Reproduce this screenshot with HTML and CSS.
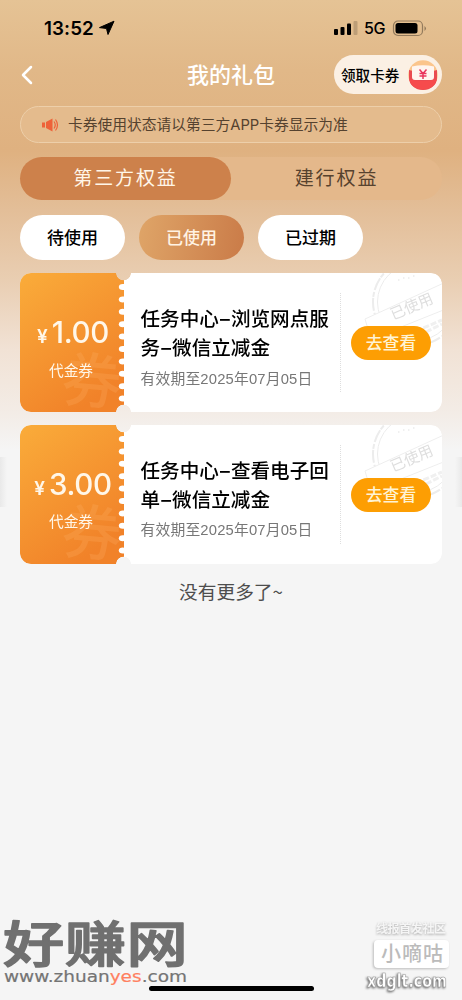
FILE: index.html
```html
<!DOCTYPE html>
<html lang="zh-CN">
<head>
<meta charset="utf-8">
<title>我的礼包</title>
<link rel="stylesheet" href="styles.css">
</head>
<body>
<svg class="defs" width="0" height="0" aria-hidden="true">
  <defs>
    <linearGradient id="orange" x1="0" y1="0" x2=".55" y2="1"><stop stop-color="#faac3a"/><stop offset="1" stop-color="#f18229"/></linearGradient>
    <symbol id="teeth" viewBox="0 0 10 140">
      <g fill="#fff"><ellipse cx="4.800" cy="14" rx="4" ry="3"/><ellipse cx="4.800" cy="26.4" rx="4" ry="3"/><ellipse cx="4.800" cy="38.8" rx="4" ry="3"/><ellipse cx="4.800" cy="51.2" rx="4" ry="3"/><ellipse cx="4.800" cy="63.6" rx="4" ry="3"/><ellipse cx="4.800" cy="76" rx="4" ry="3"/><ellipse cx="4.800" cy="88.4" rx="4" ry="3"/><ellipse cx="4.800" cy="100.8" rx="4" ry="3"/><ellipse cx="4.800" cy="113.2" rx="4" ry="3"/><ellipse cx="4.800" cy="125.6" rx="4" ry="3"/></g>
    </symbol>
    <symbol id="stamp" viewBox="0 0 80 70">
      <g fill="none" stroke="#ececec">
        <circle cx="54" cy="29" r="43" stroke-width="2" stroke-dasharray="13 1 5 2"/>
        <circle cx="54" cy="29" r="38.5" stroke-width="1"/>
        <path d="M36 7h1.500M41 5h1.500M46 5h1.500M51 3h1.500" stroke-width="1.500"/>
        <path d="M54 58l26-11M64 59l16-8" stroke-width="3" stroke-dasharray="6 2" stroke="#f0f0f0"/>
      </g>
      <path d="M3 46L84 9V36L9 66Z" fill="#fff" stroke="#eee"/>
      <text class="stamp-text" x="31" y="47" transform="rotate(-23 31 47)">已使用</text>
    </symbol>
  </defs>
</svg>
<main class="screen">
  <header class="status">
    <span class="time">13:52</span>
    <svg class="arrow" width="18" height="16" viewBox="0 0 18 16"><path d="M17 1.200L11 14.500 9.500 8.500 2.500 7.600Z" stroke="#000" stroke-linejoin="round"/></svg>
    <span class="grow"></span>
    <svg width="25" height="16" viewBox="0 0 25 16"><rect x="0" y="9" width="4" height="6" rx="1"/><rect x="6.500" y="7" width="4" height="8" rx="1"/><rect x="13" y="3.500" width="4" height="11.500" rx="1"/><rect x="19.500" y="1" width="4" height="14" rx="1" fill="#bd9e77"/></svg>
    <span class="network">5G</span>
    <svg width="35" height="17" viewBox="0 0 35 17"><rect x="1.500" y="1" width="29" height="14.5" rx="4.5" fill="none" stroke="#937a5c" stroke-width="1.2"/><rect x="3.500" y="3" width="22" height="10.5" rx="2.5"/><path d="M32.500 6q3 2.500 0 5z" fill="#937a5c"/></svg>
  </header>
  <nav class="navbar">
    <svg class="back" width="14" height="22" viewBox="0 0 14 22"><path d="M11 3L3 11L11 19" fill="none" stroke="#fff" stroke-width="2.5" stroke-linecap="round" stroke-linejoin="round"/></svg>
    <h1>我的礼包</h1>
    <a class="claim"><span>领取卡券</span>
      <svg width="32" height="32" viewBox="0 0 32 32"><circle cx="16" cy="16" r="14.700" fill="#fbc58c"/><path d="M2 11L6 12V9H26V12L30 11V19A14 12 0 0 1 2 19Z" fill="#e94b51"/><path d="M2 20Q16 24 30 20Q27 30.500 16 30.500T2 20" fill="#f64b4c"/><path d="M5 7.500Q16 5 27 7.500V18Q27 21 24 21H8Q5 21 5 18Z" fill="#fff5ef"/><path d="M12.500 10.500l3.500 4 3.500-4M16 14.500v5.500M12.500 14.500h7M12.500 17h7" fill="none" stroke="#e9345c" stroke-width="1.500"/></svg>
    </a>
  </nav>
  <div class="notice">
    <svg width="18" height="16" viewBox="0 0 18 16"><path d="M0 5.500H3V10.500H0ZM4 5L10.500 1.500V14.500L4 11Z" fill="#ee6239"/><path d="M12 4.500q2.500 3.500 0 7M13.500 2.500q4 5.500 0 11" fill="none" stroke="#ee6239" stroke-width="1.200"/></svg>
    <span>卡券使用状态请以第三方APP卡券显示为准</span>
  </div>
  <div class="tabs"><span class="tab active">第三方权益</span><span class="tab">建行权益</span></div>
  <div class="chips"><span class="chip">待使用</span><span class="chip selected">已使用</span><span class="chip">已过期</span></div>
  <section class="cards">
    <article class="card">
      <div class="value">
        <svg class="paint" width="104" height="139" viewBox="0 0 104 139"><rect width="104" height="139" fill="url(#orange)"/><text class="ghost" x="42" y="130" transform="rotate(5 72 105)">券</text><use href="#teeth" x="98" width="10" height="140"/></svg>
        <div class="price"><span>¥</span><b class="one">1.00</b></div><div class="type">代金券</div>
      </div>
      <div class="info"><h2>任务中心<i>–</i>浏览网点服<br>务<i>–</i>微信立减金</h2><p>有效期至2025年07月05日</p></div>
      <div class="action"><svg class="stamp" width="80" height="70"><use href="#stamp" width="80" height="70"/></svg><a>去查看</a></div>
    </article>
    <article class="card">
      <div class="value">
        <svg class="paint" width="104" height="139" viewBox="0 0 104 139"><rect width="104" height="139" fill="url(#orange)"/><text class="ghost" x="42" y="130" transform="rotate(5 72 105)">券</text><use href="#teeth" x="98" width="10" height="140"/></svg>
        <div class="price"><span>¥</span><b>3.00</b></div><div class="type">代金券</div>
      </div>
      <div class="info"><h2>任务中心<i>–</i>查看电子回<br>单<i>–</i>微信立减金</h2><p>有效期至2025年07月05日</p></div>
      <div class="action"><svg class="stamp" width="80" height="70"><use href="#stamp" width="80" height="70"/></svg><a>去查看</a></div>
    </article>
  </section>
  <p class="end">没有更多了~</p>
  <div class="edge left"></div><div class="edge right"></div>
  <div class="home"></div>
  <svg class="brand" width="192" height="76" viewBox="0 0 192 76">
    <text class="brand-name" transform="translate(3 52) scale(1.02 .82)" textLength="181">好赚网</text>
    <text class="brand-url" x="4" y="71.5" textLength="183" lengthAdjust="spacingAndGlyphs">www.zhuan<tspan fill="#ff805f">yes</tspan>.com</text>
  </svg>
  <svg class="forum" width="96" height="80" viewBox="0 0 96 80">
    <text class="forum-top" x="10" y="18" textLength="70">线报首发社区</text>
    <rect class="forum-box" x="8" y="25" width="75" height="28" rx="4"/>
    <text class="forum-name" x="15" y="46" textLength="62">小嘀咕</text>
    <text class="forum-url" x="1" y="72" textLength="80" lengthAdjust="spacingAndGlyphs">xdglt.com</text>
  </svg>
</main>
</body>
</html>
```
FILE: styles.css
```css
* { box-sizing: border-box; }
body { margin: 0; }
h1, h2, p { margin: 0; font-weight: 500; }
.defs { position: absolute; }
.screen {
  position: relative; width: 462px; height: 1000px; overflow: hidden; padding: 0 20px;
  background: linear-gradient(#e5c395 0, #e1b888 70px, #dfb180 150px, #e3be98 210px, #e9ceb2 280px, #f1e2d5 350px, #f3ece6 412px, #f5f5f5 450px);
  font-family: Inter, "Noto Sans CJK SC", sans-serif; color: #000;
}
.status { display: flex; align-items: center; height: 55px; padding: 1px 15px 0 24px; }
.time { font-size: 18.8px; font-weight: 600; width: 53px; letter-spacing: .1px; }
.grow { flex: 1; }
.network { font-size: 16px; font-weight: 500; width: 31px; padding-left: 5px; margin-right: 2px; letter-spacing: -.3px; }
.status svg { flex: none; }
.navbar { display: grid; grid-template-columns: 108px 1fr 108px; grid-template-rows: 39px; height: 39px; align-items: center; }
.navbar h1 { color: #fff; font-size: 22px; line-height: 39px; padding-top: 1px; text-align: center; }
.claim { height: 39px; border-radius: 20px; background: #fbf0e4; display: flex; align-items: center; padding-left: 7px; font-size: 14.6px; font-weight: 500; }
.claim span { width: 65px; white-space: nowrap; }
.claim svg { margin-left: 1px; flex: none; }
.notice { height: 37px; margin: 12px 0 0; border: 1px solid #edcfaa; border-radius: 19px; background: #e4bb8d; display: flex; align-items: center; padding-left: 21px; gap: 8px; font-size: 14.75px; color: #55422f; white-space: nowrap; }
.notice span { margin-top: -2px; }
.tabs { display: flex; height: 43px; margin-top: 14px; border-radius: 22px; background: #e4b88b; }
.tab { width: 211px; border-radius: 22px; text-align: center; line-height: 43px; font-size: 19px; letter-spacing: 1.9px; color: #57422e; }
.tab.active { background: #cd814b; color: #fff6e8; }
.chips { display: flex; gap: 14px; margin-top: 15px; }
.chip { width: 105px; height: 45px; line-height: 46px; text-align: center; border-radius: 23px; background: #fff; font-size: 17px; font-weight: 500; }
.chip.selected { color: #fff3e4; background: linear-gradient(100deg, #dfa568, #ca7b48); }
.cards { display: flex; flex-direction: column; gap: 12.5px; margin-top: 13px; }
.card {
  --notch: radial-gradient(circle at 103.5px 0, transparent 7px, #000 7.6px);
  --notch-end: radial-gradient(circle at 103.5px 100%, transparent 7px, #000 7.6px);
  height: 139px; display: flex; position: relative; overflow: hidden; border-radius: 11px; background: #fff;
  mask: var(--notch), var(--notch-end);
  mask-composite: intersect;
}
.value { width: 104px; position: relative; padding-top: 39px; color: #fff7e9; text-align: center; flex: none; }
.paint { position: absolute; top: 0; left: 0; }
.ghost { font: 500 60px "Noto Sans CJK SC"; fill: #ffb56c; opacity: .22; }
.price, .type { position: relative; }
.price { height: 40px; display: flex; align-items: baseline; justify-content: center; line-height: 40px; gap: 4px; padding-left: 2px; }
.price span { font-size: 19px; font-weight: 600; }
.price b { font-size: 29.5px; font-weight: 500; letter-spacing: -.3px; }
.type { font-size: 14.7px; line-height: 20px; margin-top: 8.5px; padding-right: 2px; }
.info { width: 217px; padding: 32px 0 0 16.5px; flex: none; white-space: nowrap; }
.info h2 { font-size: 19.6px; line-height: 29px; }
.info i { display: inline-block; width: 12px; text-align: center; font-style: normal; }
.info p { font-size: 14.8px; line-height: 22px; margin-top: 4.5px; color: #777; font-weight: 400; font-family: "Liberation Sans", "Noto Sans CJK SC", sans-serif; letter-spacing: .17px; }
.action { width: 101px; height: 99px; margin-top: 20px; margin-left: -1px; padding: 33px 0 0 10px; border-left: 1px dotted #dedede; }
.action a { display: block; position: relative; width: 80px; height: 34px; border-radius: 17px; background: #fd9e03; color: #fff3d4; font-size: 16.8px; font-weight: 500; line-height: 35px; text-align: center; }
.stamp { position: absolute; left: 342px; top: 0; }
.stamp-text { font: 15px "Noto Sans CJK SC"; fill: #dedede; }
.end { height: 28px; margin-top: 14px; text-align: center; font: 18.7px/26px "Noto Sans CJK SC"; color: #4d4d4d; }
.edge { position: absolute; top: 457px; width: 7px; height: 50px; }
.edge.left { left: 0; background: linear-gradient(90deg, #e9e9e9, #f5f5f5); }
.edge.right { right: 0; background: linear-gradient(270deg, #e9e9e9, #f5f5f5); }
.home { position: absolute; left: 149px; top: 986px; width: 165px; height: 5px; border-radius: 3px; background: #000; }
.brand { position: absolute; left: 0; top: 910px; overflow: visible; }
.brand-name { font: 500 60px "Noto Sans CJK SC"; fill: #707070; stroke: #707070; stroke-width: 1.8px; stroke-linejoin: round; }
.brand-url { font: 16px "DejaVu Sans"; fill: #747474; stroke: #747474; stroke-width: .2px; }
.brand-url tspan { stroke: #ff805f; }
.forum { position: absolute; left: 366px; top: 915px; overflow: visible; }
.forum-top { font: 700 12px "Noto Sans CJK SC"; fill: #f5f5f5; filter: drop-shadow(0 1px 1px #aaa); }
.forum-box { fill: #fff; filter: drop-shadow(-1px 1px 1px #bbb); }
.forum-name { font: 500 20px "Noto Sans CJK SC"; fill: #bbb; }
.forum-url { font: 700 18px "DejaVu Sans"; fill: #fff; stroke: #999; stroke-width: .6px; filter: drop-shadow(-1px 1px 1px #666); }
```
